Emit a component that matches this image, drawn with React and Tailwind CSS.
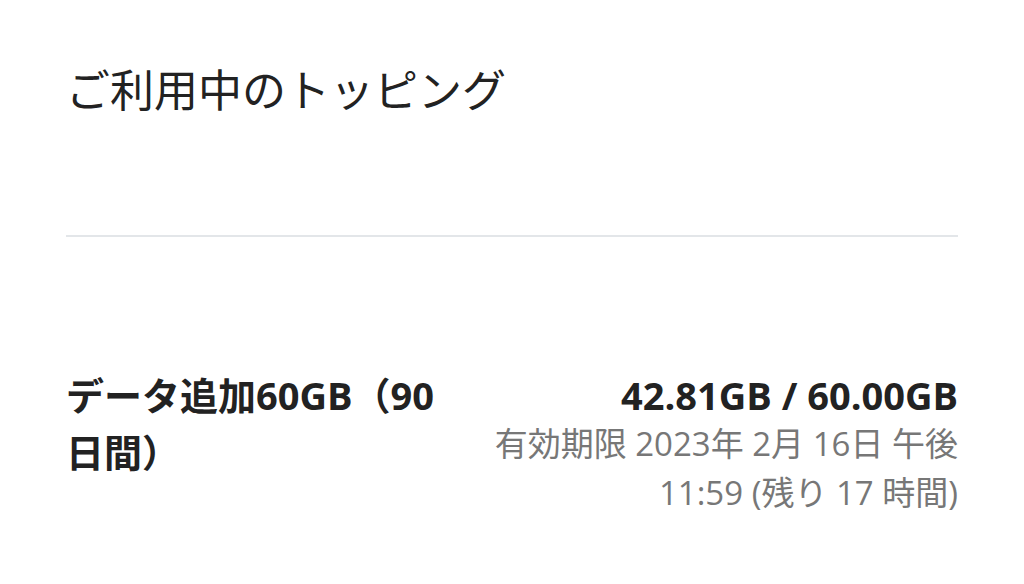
export default function App() {
  return (
    <div
      className="w-[1024px] h-[584px] bg-white px-[66px] text-[#222]"
      style={{ fontFamily: '"Open Sans", "Noto Sans CJK JP", sans-serif' }}
    >
      <h1 className="pt-[60px] text-[44px] leading-[60px] font-normal">ご利用中のトッピング</h1>
      <div className="mt-[115px] h-[2px] bg-[#e3e6e9]" />
      <div className="mt-[130px] flex items-start justify-between">
        <p className="w-[380px] text-[38px] leading-[57px] font-bold">データ追加60GB（90日間）</p>
        <div className="mt-[4px] w-[500px] text-right">
          <p className="text-[38px] leading-[48px] font-bold text-[#222]">42.81GB / 60.00GB</p>
          <p className="text-[33px] leading-[49px] text-[#777]">
            有効期限 2023年 2月 16日 午後 11:59 (残り 17 時間)
          </p>
        </div>
      </div>
    </div>
  );
}
